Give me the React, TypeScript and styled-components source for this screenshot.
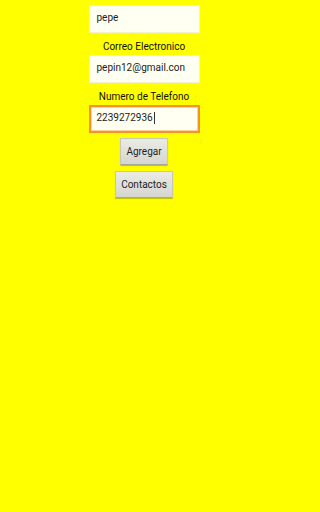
import React from 'react';
import styled, { createGlobalStyle } from 'styled-components';

const GlobalStyle = createGlobalStyle`
  html, body {
    margin: 0;
    padding: 0;
    background: #ffff00;
    font-family: Roboto, "Noto Sans", sans-serif;
  }
`;

type Field = { label: string; value: string; focused?: boolean };

const fields: Field[] = [
  { label: 'Nombre', value: 'pepe' },
  { label: 'Correo Electronico', value: 'pepin12@gmail.con' },
  { label: 'Numero de Telefono', value: '2239272936', focused: true },
];

export default function App() {
  return (
    <>
      <GlobalStyle />
      <Screen>
        <Form>
          {fields.map((field) => (
            <FieldGroup key={field.label}>
              <Label>{field.label}</Label>
              <Input focused={!!field.focused}>
                <span>{field.value}</span>
                {field.focused && <Caret />}
              </Input>
            </FieldGroup>
          ))}
          <Buttons>
            <Button>Agregar</Button>
            <Button>Contactos</Button>
          </Buttons>
        </Form>
      </Screen>
    </>
  );
}

const Screen = styled.div`
  width: 288px;
  height: 512px;
  background: #ffff00;
  overflow: hidden;
`;

const Form = styled.div`
  margin-top: -17px;
  display: flex;
  flex-direction: column;
  align-items: center;
`;

const FieldGroup = styled.div`
  display: flex;
  flex-direction: column;
  align-items: center;
  margin-top: 5px;
`;

const Label = styled.div`
  height: 17px;
  line-height: 17px;
  font-size: 10px;
  color: #111100;
  text-align: center;
`;

const Input = styled.div<{ focused: boolean }>`
  box-sizing: border-box;
  width: 111px;
  height: 28px;
  display: flex;
  align-items: center;
  padding-bottom: 3px;
  padding-left: ${(p) => (p.focused ? '6px' : '7px')};
  font-size: 10px;
  color: #1c1c1c;
  background: #fffff2;
  border: ${(p) => (p.focused ? '2px solid #f5922b' : '1px solid #f2f2cc')};
  box-shadow: ${(p) => (p.focused ? 'inset 0 0 0 1px #fcd49a' : 'none')};
`;

const Caret = styled.span`
  display: inline-block;
  width: 1px;
  height: 12px;
  margin-left: 1px;
  background: #333;
`;

const Buttons = styled.div`
  display: flex;
  flex-direction: column;
  align-items: center;
  gap: 6px;
  margin-top: 5px;
`;

const Button = styled.button`
  box-sizing: border-box;
  height: 27px;
  min-width: 43px;
  padding: 0 5px;
  font-family: Roboto, "Noto Sans", sans-serif;
  font-size: 10px;
  color: #222;
  background: linear-gradient(#ebebe6, #d6d6d0);
  border: 1px solid #c8c8b8;
  border-bottom-color: #a8a898;
  border-radius: 1px;
  box-shadow: 0 1px 1px rgba(0, 0, 0, 0.25);
`;
